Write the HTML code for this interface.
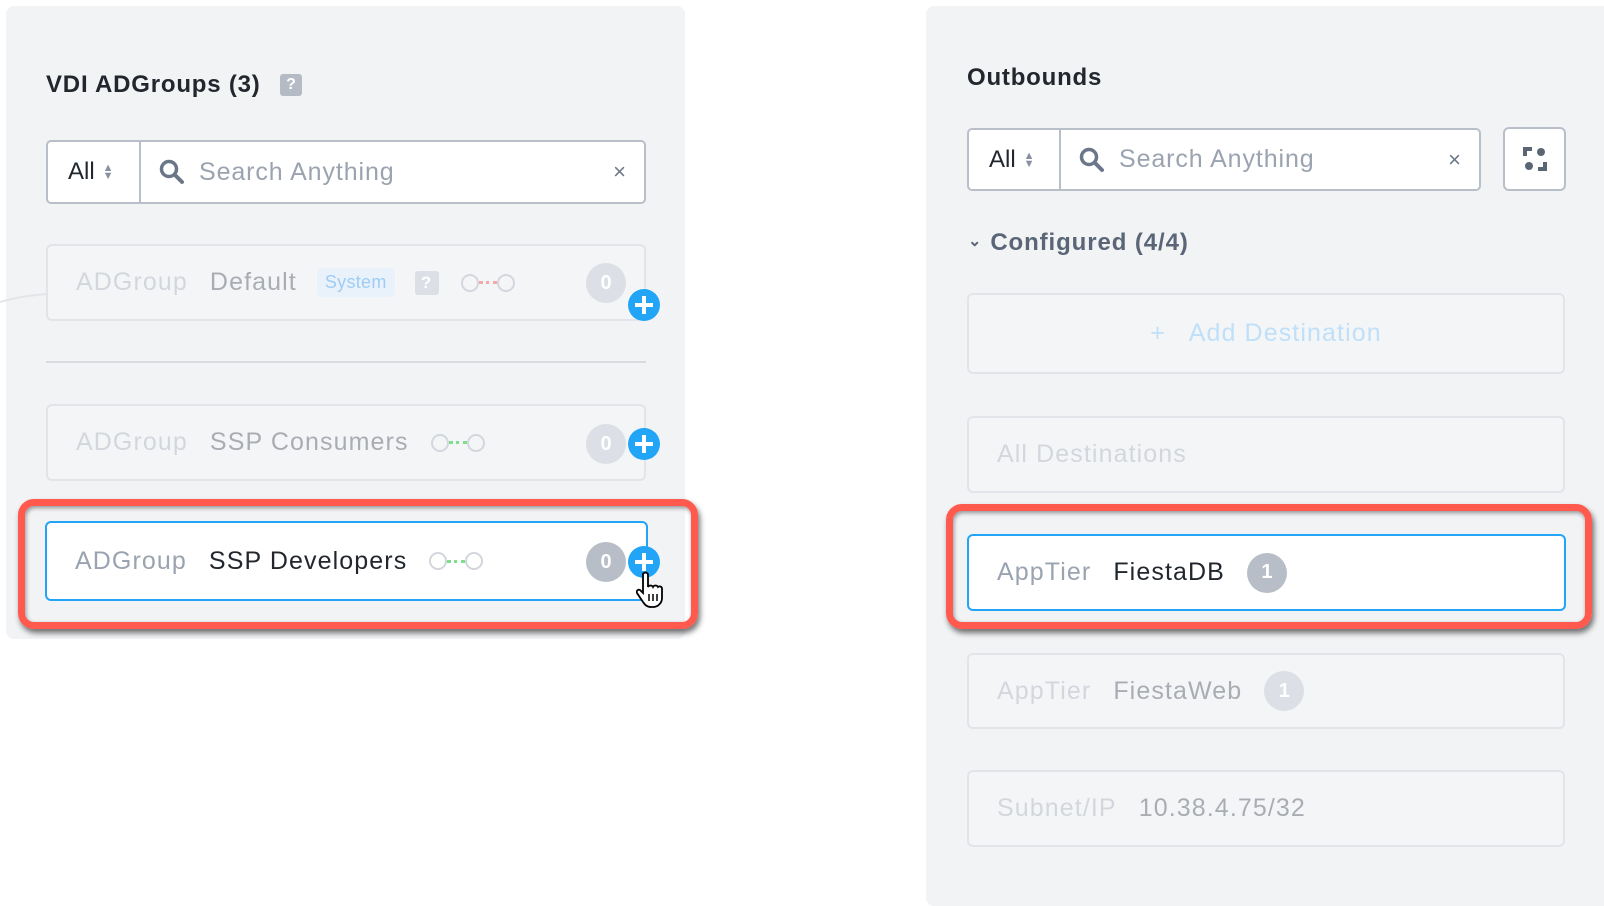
<!DOCTYPE html>
<html><head><meta charset="utf-8"><style>
*{box-sizing:border-box;margin:0;padding:0}
body{width:1604px;height:880px;background:#fff;position:relative;overflow:hidden;font-family:"Liberation Sans",sans-serif}
.a{position:absolute}
.panel{background:#f2f3f5;border-radius:8px}
.title{font-size:24px;color:#22272e;font-weight:bold;letter-spacing:0.8px}
.search{background:#fff;border:2px solid #b9bfc9;border-radius:5px;display:flex;align-items:center}
.search .all{font-size:24px;color:#22272e;padding-left:20px;display:flex;align-items:center;border-right:2px solid #b9bfc9;height:100%}
.search .ph{font-size:25px;color:#9aa3af;margin-left:14px;letter-spacing:0.9px}
.row{border:2px solid #e2e4e9;border-radius:6px;background:#f4f5f7;display:flex;align-items:center;padding-left:28px;font-size:25px;letter-spacing:1.1px}
.lab{color:#d3d7dd;margin-right:22px}
.nm{color:#a9adb3}
.badge{width:40px;height:40px;border-radius:50%;background:#dcdfe5;color:#fff;font-size:20px;font-weight:bold;display:flex;align-items:center;justify-content:center;letter-spacing:0}
.plus{width:32px;height:32px;border-radius:50%;background:#22a5f7}
.plus:before,.plus:after{content:"";position:absolute;background:#fff;left:50%;top:50%;transform:translate(-50%,-50%)}
.plus:before{width:18px;height:4px}.plus:after{width:4px;height:18px}
.red{border:7px solid #ff5a4d;border-radius:16px;box-shadow:2px 4px 6px rgba(0,0,0,.55),inset 1px 2px 4px rgba(0,0,0,.4)}
.conn{display:flex;align-items:center;margin-left:22px}
.conn i{width:18px;height:18px;border:2px solid #d3d7dd;border-radius:50%;display:block}
.conn b{width:18px;border-top:3px dotted #7ede8e;display:block}
</style></head><body>
<div class="a panel" style="left:6px;top:6px;width:679px;height:633px"></div>
<div class="a panel" style="left:926px;top:6px;width:700px;height:900px"></div>
<svg class="a" style="left:0;top:270px" width="50" height="40"><path d="M0 32 Q20 26 48 24" stroke="#e3e5e9" stroke-width="2" fill="none"/></svg>

<div class="a title" style="left:46px;top:71px">VDI ADGroups (3)</div>
<div class="a" style="left:280px;top:74px;width:22px;height:22px;background:#b5bbc4;border-radius:3px;color:#fff;font-weight:bold;font-size:16px;text-align:center;line-height:22px">?</div>

<div class="a search" style="left:46px;top:140px;width:600px;height:64px">
 <div class="all" style="width:93px">All <span style="font-size:11px;color:#8791a0;margin-left:8px;line-height:8px">▲<br>▼</span></div>
 <svg style="margin-left:18px" width="26" height="26" viewBox="0 0 26 26"><circle cx="10" cy="10" r="7.5" stroke="#6b7788" stroke-width="3.5" fill="none"/><path d="M15.5 15.5L23 23" stroke="#6b7788" stroke-width="4" stroke-linecap="round"/></svg>
 <span class="ph">Search Anything</span>
 <span style="margin-left:auto;margin-right:18px;color:#6b7788;font-size:22px">×</span>
</div>

<div class="a row" style="left:46px;top:244px;width:600px;height:77px">
 <span class="lab">ADGroup</span><span class="nm">Default</span>
 <span style="margin-left:20px;background:#e9f1fa;color:#9ecdf5;font-size:18px;padding:4px 8px;border-radius:4px;letter-spacing:0.3px">System</span>
 <span style="margin-left:20px;width:24px;height:24px;background:#dcdfe5;border-radius:3px;color:#fff;font-size:17px;font-weight:bold;text-align:center;line-height:24px">?</span>
 <span class="conn"><i></i><b style="border-color:#f4a9a9"></b><i></i></span>
</div>
<div class="a badge" style="left:586px;top:263px">0</div>
<div class="a plus" style="left:628px;top:289px"></div>

<div class="a" style="left:46px;top:361px;width:600px;height:2px;background:#d8dbe0"></div>

<div class="a row" style="left:46px;top:404px;width:600px;height:77px">
 <span class="lab">ADGroup</span><span class="nm">SSP Consumers</span>
 <span class="conn"><i></i><b></b><i></i></span>
</div>
<div class="a badge" style="left:586px;top:424px">0</div>
<div class="a plus" style="left:628px;top:428px"></div>

<div class="a red" style="left:18px;top:499px;width:680px;height:130px"></div>
<div class="a row" style="left:45px;top:521px;width:603px;height:80px;background:#fff;border-color:#22a5f7">
 <span class="lab" style="color:#9aa3b0">ADGroup</span><span class="nm" style="color:#22272e">SSP Developers</span>
 <span class="conn"><i></i><b></b><i></i></span>
</div>
<div class="a badge" style="left:586px;top:542px;background:#b8bec8">0</div>
<div class="a plus" style="left:628px;top:546px"></div>
<svg class="a" style="left:636px;top:570px" width="30" height="40" viewBox="0 0 30 40"><path d="M8 3c2-1 4 0 4 2v12c1-2 4-2 5 0 1-2 4-2 5 0 1-1 4-1 4 2v9c0 5-4 9-9 9h-2c-4 0-6-2-8-5l-6-9c-1-2 1-4 3-3l3 3V5c0-1 0-2 1-2z" fill="#fff" stroke="#000" stroke-width="1.8"/><path d="M13 24v7M17 24v7M21 24v7" stroke="#000" stroke-width="1.5"/></svg>

<!-- right -->
<div class="a title" style="left:967px;top:64px">Outbounds</div>
<div class="a search" style="left:967px;top:128px;width:514px;height:63px">
 <div class="all" style="width:92px">All <span style="font-size:11px;color:#8791a0;margin-left:8px;line-height:8px">▲<br>▼</span></div>
 <svg style="margin-left:18px" width="26" height="26" viewBox="0 0 26 26"><circle cx="10" cy="10" r="7.5" stroke="#6b7788" stroke-width="3.5" fill="none"/><path d="M15.5 15.5L23 23" stroke="#6b7788" stroke-width="4" stroke-linecap="round"/></svg>
 <span class="ph">Search Anything</span>
 <span style="margin-left:auto;margin-right:18px;color:#6b7788;font-size:22px">×</span>
</div>
<div class="a" style="left:1503px;top:127px;width:63px;height:64px;background:#fff;border:2px solid #b9bfc9;border-radius:6px">
 <svg style="position:absolute;left:17px;top:17px" width="26" height="26" viewBox="0 0 26 26"><path d="M3 10V3h7" stroke="#5b6675" stroke-width="4" fill="none"/><path d="M23 16v7h-7" stroke="#5b6675" stroke-width="4" fill="none"/><circle cx="19" cy="6" r="4" fill="#5b6675"/><circle cx="7" cy="20" r="4" fill="#5b6675"/></svg>
</div>
<div class="a" style="left:968px;top:229px;font-size:24px;color:#5a6677;font-weight:bold;letter-spacing:0.9px"><span style="font-size:16px;margin-right:8px;position:relative;top:-4px">⌄</span>Configured (4/4)</div>

<div class="a row" style="left:967px;top:293px;width:598px;height:81px;justify-content:center;padding-left:0;color:#bfe0f8">+&nbsp;&nbsp; Add Destination</div>
<div class="a row" style="left:967px;top:416px;width:598px;height:77px"><span class="lab">All Destinations</span></div>

<div class="a red" style="left:946px;top:504px;width:646px;height:125px"></div>
<div class="a row" style="left:967px;top:534px;width:599px;height:77px;background:#fff;border-color:#22a5f7">
 <span class="lab" style="color:#9aa3b0">AppTier</span><span class="nm" style="color:#22272e">FiestaDB</span>
 <span class="badge" style="margin-left:22px;background:#b8bec8">1</span>
</div>
<div class="a row" style="left:967px;top:653px;width:598px;height:76px">
 <span class="lab">AppTier</span><span class="nm">FiestaWeb</span>
 <span class="badge" style="margin-left:22px">1</span>
</div>
<div class="a row" style="left:967px;top:770px;width:598px;height:77px">
 <span class="lab">Subnet/IP</span><span class="nm">10.38.4.75/32</span>
</div>
</body></html>
